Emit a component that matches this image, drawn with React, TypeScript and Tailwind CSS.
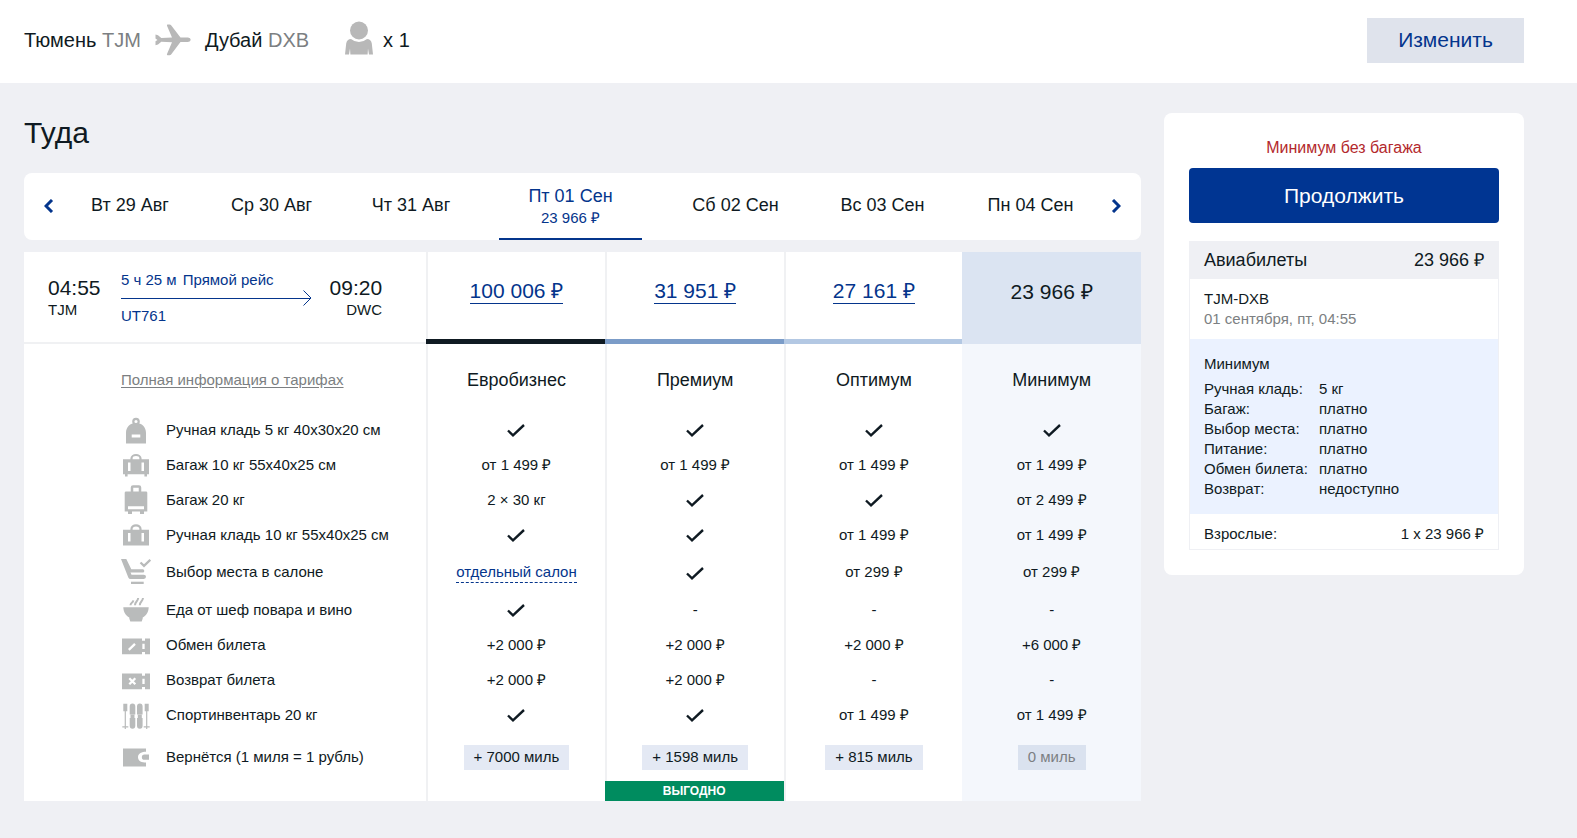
import { useState, type ReactNode } from 'react'
import clsx from 'clsx'

type IconName =
  | 'backpack' | 'case' | 'luggage' | 'handbag' | 'seat' | 'meal' | 'exchange' | 'refund' | 'sport' | 'wallet'

const ICONS: Record<IconName, ReactNode> = {
  backpack: (
    <>
      <circle cx="15" cy="6.5" r="2.7" fill="none" stroke="currentColor" strokeWidth="2.2" />
      <path fillRule="evenodd" d="M5 28.5V18C5 12 9 8 15 8s10 4 10 10v10.500zM10.700 19.500v3h8.600v-3z" />
    </>
  ),
  case: (
    <>
      <path d="M10.500 10V8.500a4.500 3.500 0 0 1 9 0V10" fill="none" stroke="currentColor" strokeWidth="2.200" />
      <path fillRule="evenodd" d="M2 9.200h26v15h-2v2.300h-2.600v-2.300H6.600v2.300H4v-2.300H2zM7 12.500v8.500h2.500v-8.500zM20.500 12.500v8.500H23v-8.500z" />
    </>
  ),
  luggage: (
    <>
      <path d="M11 7V2.500q0-1 1-1h6q1 0 1 1V7" fill="none" stroke="currentColor" strokeWidth="2.500" />
      <path fillRule="evenodd" d="M5 6.500h20q1.300 0 1.300 1.300v18.700H23v2.500h-4v-2.500h-8V29H7v-2.500H3.700V7.800Q3.700 6.500 5 6.500zM7 21.300v2.900h16v-2.900z" />
    </>
  ),
  handbag: (
    <>
      <path d="M10.500 10.500V9a4.500 3.700 0 0 1 9 0v1.500" fill="none" stroke="currentColor" strokeWidth="2.200" />
      <path fillRule="evenodd" d="M2 9.800h26v15.700H2zM7 13v8.500h2.500V13zM20.500 13v8.500H23V13z" />
    </>
  ),
  seat: (
    <>
      <path d="M0 2h5.300l5 10.200h11.500q1.500 0 1.500 1.700t-1.500 1.700H9.500l1 2.100h12.300q2.200 0 2.200 2.100T22.800 22H9.500q-1.500 0-2.200-1.500z" />
      <path d="M10 24.700h12.700V27H10z" />
      <path d="M19.500 5.500l3.500 3.300 6.300-6" fill="none" stroke="currentColor" strokeWidth="2.300" />
    </>
  ),
  meal: (
    <>
      <path d="M2.300 12.200h25.400c-.2 5-2.500 8.300-6 10.300v1l-1 3H9.300l-1-3v-1c-3.500-2-5.800-5.300-6-10.300z" />
      <path d="M9.500 10.300c0-3 2.500-2 2.800-5M14 10.300c0-4 2.800-3.500 3.200-7.300M18.800 10.300c0-4 2.800-3.500 3.200-7.300" fill="none" stroke="currentColor" strokeWidth="2" />
    </>
  ),
  exchange: (
    <>
      <path d="M1 8.500h20v2.200h3V8.500h5v15.700h-5V22h-3v2.200H1z" />
      <path d="M7.800 19.800l6.200-6M22.500 13.800v5.200" fill="none" stroke="#fff" strokeWidth="2.300" />
    </>
  ),
  refund: (
    <>
      <path d="M1 8.500h20v2.200h3V8.500h5v15.700h-5V22h-3v2.200H1z" />
      <path d="M8.300 13.300l6 6M14.300 13.300l-6 6M22.500 13.800v5.200" fill="none" stroke="#fff" strokeWidth="2.300" />
    </>
  ),
  sport: (
    <>
      <path d="M2.300 3.800h4v7.500h-4zM23.700 3.800h4v7.500h-4z" />
      <path d="M4.300 11v18M25.700 11v18M1.300 26.800h6M22.700 26.800h6" fill="none" stroke="currentColor" strokeWidth="1.200" />
      <path d="M8.700 14.500v-8q0-3 2.800-3t2.800 3v8zM8.700 18h5.600v7.500q0 3.300-2.800 3.300t-2.800-3.300zM16 14.500v-8q0-3 2.800-3t2.800 3v8zM16 18h5.600v7.500q0 3.300-2.800 3.300T16 25.500z" />
      <path d="M9.500 14.500h4v4h-4zM16.800 14.500h4v4h-4z" />
    </>
  ),
  wallet: (
    <path d="M2 6.500h23v3.300c-4 0-8 1.500-8 5.400s4 5.400 8 5.400v3.900H2zM28 12.500v5.300h-4.500a2.650 2.650 0 0 1 0-5.300z" />
  ),
}

type Tone = 'business' | 'premium' | 'optimum' | 'minimum'

const FARES: { id: Tone; name: string; price: string; miles: string }[] = [
  { id: 'business', name: 'Евробизнес', price: '100 006 ₽', miles: '+ 7000 миль' },
  { id: 'premium', name: 'Премиум', price: '31 951 ₽', miles: '+ 1598 миль' },
  { id: 'optimum', name: 'Оптимум', price: '27 161 ₽', miles: '+ 815 миль' },
  { id: 'minimum', name: 'Минимум', price: '23 966 ₽', miles: '0 миль' },
]

const BAR: Record<Tone, string> = {
  business: 'bg-[#0f1a22]',
  premium: 'bg-[#7b9cc8]',
  optimum: 'bg-[#b3c8e3]',
  minimum: 'bg-[#dbe4f2]',
}

// 'yes' is drawn as a tick
const SERVICES: { icon: IconName; label: string; values: string[]; tall?: boolean }[] = [
  { icon: 'backpack', label: 'Ручная кладь 5 кг 40x30x20 см', values: ['yes', 'yes', 'yes', 'yes'] },
  { icon: 'case', label: 'Багаж 10 кг 55x40x25 см', values: ['от 1 499 ₽', 'от 1 499 ₽', 'от 1 499 ₽', 'от 1 499 ₽'] },
  { icon: 'luggage', label: 'Багаж 20 кг', values: ['2 × 30 кг', 'yes', 'yes', 'от 2 499 ₽'] },
  { icon: 'handbag', label: 'Ручная кладь 10 кг 55x40x25 см', values: ['yes', 'yes', 'от 1 499 ₽', 'от 1 499 ₽'] },
  { icon: 'seat', label: 'Выбор места в салоне', values: ['cabin', 'yes', 'от 299 ₽', 'от 299 ₽'], tall: true },
  { icon: 'meal', label: 'Еда от шеф повара и вино', values: ['yes', '-', '-', '-'] },
  { icon: 'exchange', label: 'Обмен билета', values: ['+2 000 ₽', '+2 000 ₽', '+2 000 ₽', '+6 000 ₽'] },
  { icon: 'refund', label: 'Возврат билета', values: ['+2 000 ₽', '+2 000 ₽', '-', '-'] },
  { icon: 'sport', label: 'Спортинвентарь 20 кг', values: ['yes', 'yes', 'от 1 499 ₽', 'от 1 499 ₽'] },
]

const DATES = [
  { label: 'Вт 29 Авг' },
  { label: 'Ср 30 Авг' },
  { label: 'Чт 31 Авг' },
  { label: 'Пт 01 Сен', price: '23 966 ₽' },
  { label: 'Сб 02 Сен' },
  { label: 'Вс 03 Сен' },
  { label: 'Пн 04 Сен' },
]

const SUMMARY = [
  ['Ручная кладь:', '5 кг'],
  ['Багаж:', 'платно'],
  ['Выбор места:', 'платно'],
  ['Питание:', 'платно'],
  ['Обмен билета:', 'платно'],
  ['Возврат:', 'недоступно'],
]

export default function App() {
  return (
    <div className="min-h-screen bg-[#eff0f4] font-['Liberation_Sans',Arial,sans-serif] text-[15px] leading-5 text-[#0f1a22]">
      <Header />
      <main className="flex items-start gap-[23px] pt-[30px] pr-[53px] pb-9 pl-6">
        <section className="min-w-0 flex-1">
          <h1 className="mb-5 text-3xl leading-10">Туда</h1>
          <DateStrip />
          <FareTable />
        </section>
        <Summary />
      </main>
    </div>
  )
}

function Header() {
  return (
    <header className="flex h-[83px] items-center bg-white pr-[53px] pb-[3px] pl-6 text-xl">
      <span>
        Тюмень <span className="text-[#7c7f82]">TJM</span>
      </span>
      <svg viewBox="0 0 36 32" className="mx-[14px] h-8 w-9 fill-[#b8b8b8]" aria-hidden="true">
        <path d="M.5 10.500l2.500.8 3.300 2.700 10.700-.5L12 1.800Q11.500.5 12.800.5h1.800q.9 0 1.500.8L25.500 13.500H33q2.700.2 2.700 2.300T33 18h-7.500l-9.400 12.500q-.6.800-1.500.8h-1.800q-1.300 0-.8-1.300L17 18.300l-10.700-.5L3 20.500l-2.500.8v-4l2-1.400-2-1.400z" />
      </svg>
      <span>
        Дубай <span className="text-[#7c7f82]">DXB</span>
      </span>
      <svg viewBox="0 0 28 34" className="mr-2.5 mb-1 ml-9 h-[34px] w-7 fill-[#b8b8b8]" aria-hidden="true">
        <circle cx="14" cy="9.500" r="9" />
        <path d="M6 18q3.500 3 8 3t8-3q4 .200 4.800 4.500L28 33.500h-4l-1-6-.4 6H5.400l-.4-6-1 6H0l1.200-11Q2 18.200 6 18z" />
      </svg>
      <span>x 1</span>
      <button type="button" className="ml-auto h-[45px] w-[157px] bg-[#dfe3ec] text-[21px] text-[#04358c]">
        Изменить
      </button>
    </header>
  )
}

function DateStrip() {
  const [active, setActive] = useState(3)
  return (
    <nav className="mb-3 flex h-[67px] rounded-lg bg-white text-lg leading-6">
      <ArrowButton label="Предыдущие даты" d="M8 1L2 7l6 6" className="pl-3.5" />
      <div className="grid flex-1 grid-cols-[140fr_143fr_136fr_183fr_147fr_147fr_149fr]">
        {DATES.map((date, i) => (
          <button
            key={date.label}
            type="button"
            onClick={() => setActive(i)}
            className={clsx(
              'flex flex-col items-center justify-center whitespace-nowrap',
              i === active ? 'mx-5 border-b-2 border-[#04358c] text-[#04358c]' : 'pb-1',
            )}
          >
            {date.label}
            {date.price && <span className="text-[15px] leading-5">{date.price}</span>}
          </button>
        ))}
      </div>
      <ArrowButton label="Следующие даты" d="M2 1l6 6-6 6" className="pr-3.5" />
    </nav>
  )
}

function ArrowButton({ label, d, className }: { label: string; d: string; className: string }) {
  return (
    <button type="button" aria-label={label} className={clsx('flex w-9 items-center justify-center pb-0.5', className)}>
      <svg viewBox="0 0 10 14" className="h-3.5 w-2.5" fill="none" stroke="#04358c" strokeWidth="3">
        <path d={d} />
      </svg>
    </button>
  )
}

function FareTable() {
  return (
    <table className="w-full table-fixed border-separate border-spacing-0 bg-white">
      <colgroup>
        <col className="w-[36%]" />
        <col span={4} className="w-[16%]" />
      </colgroup>
      <thead>
        <tr>
          <td className="border-b-2 border-[#f0f1f3] p-0 pr-11 pl-6 align-top">
            <Flight />
          </td>
          {FARES.map((fare) => (
            <td key={fare.id} className={clsx('p-0', fare.id === 'minimum' && 'bg-[#dbe4f2]')}>
              <div className="flex h-[92px] flex-col text-[21px] leading-6">
                <div
                  className={clsx(
                    'flex flex-1 items-center justify-center pb-2',
                    fare.id !== 'minimum' && 'border-l-2 border-[#f0f1f3]',
                  )}
                >
                  {fare.id === 'minimum' ? (
                    <span>{fare.price}</span>
                  ) : (
                    <a href="#" className="border-b border-[#04358c] text-[#04358c]">{fare.price}</a>
                  )}
                </div>
                <div className={clsx('h-[5px]', BAR[fare.id])} />
              </div>
            </td>
          ))}
        </tr>
        <tr className="h-[68px]">
          <td className="p-0 pt-1 pl-[97px]">
            <a href="#" className="text-[#7c7f82] underline underline-offset-2">Полная информация о тарифах</a>
          </td>
          {FARES.map((fare) => (
            <th key={fare.id} scope="col" className={clsx('p-0 pt-1 text-lg font-normal', cellClass(fare.id))}>
              {fare.name}
            </th>
          ))}
        </tr>
      </thead>
      <tbody>
        {SERVICES.map((row) => (
          <tr key={row.label} className={row.tall ? 'h-10' : 'h-[35px]'}>
            <ServiceLabel icon={row.icon}>{row.label}</ServiceLabel>
            {row.values.map((value, i) => (
              <td key={FARES[i].id} className={clsx('p-0 text-center', cellClass(FARES[i].id))}>
                <Value value={value} />
              </td>
            ))}
          </tr>
        ))}
        <tr className="h-[49px]">
          <ServiceLabel icon="wallet">Вернётся (1 миля = 1 рубль)</ServiceLabel>
          {FARES.map((fare) => (
            <td key={fare.id} className={clsx('p-0 pt-0.5 text-center', cellClass(fare.id))}>
              <span
                className={clsx(
                  'inline-block px-2.5 pt-0.5 pb-[3px] align-middle',
                  fare.id === 'minimum' ? 'bg-[#dae2ef] text-[#7c7f82]' : 'bg-[#e4e9f4]',
                )}
              >
                {fare.miles}
              </span>
            </td>
          ))}
        </tr>
        <tr className="h-5">
          <td />
          {FARES.map((fare) =>
            fare.id === 'premium' ? (
              <td key={fare.id} className="bg-[#008c5f] p-0 text-center text-xs leading-5 font-bold text-white">
                ВЫГОДНО
              </td>
            ) : (
              <td key={fare.id} className={clsx('p-0', cellClass(fare.id))} />
            ),
          )}
        </tr>
      </tbody>
    </table>
  )
}

function cellClass(id: Tone) {
  return id === 'minimum' ? 'bg-[#f4f7fc]' : 'border-l-2 border-[#f0f1f3]'
}

function ServiceLabel({ icon, children }: { icon: IconName; children: ReactNode }) {
  return (
    <th scope="row" className="p-0 pl-[97px] text-left font-normal whitespace-nowrap">
      <div className="flex items-center gap-[15px]">
        <svg viewBox="0 0 30 30" className="size-[30px] shrink-0 fill-current text-[#b9bbbb]" aria-hidden="true">
          {ICONS[icon]}
        </svg>
        {children}
      </div>
    </th>
  )
}

function Value({ value }: { value: string }) {
  if (value === 'yes') {
    return (
      <svg viewBox="0 0 18 13" className="mx-auto mt-0.5 h-[13px] w-[18px]" fill="none" stroke="#0f1a22" strokeWidth="2.400" role="img" aria-label="Включено">
        <path d="M1 6.500l5 4.800L17 1" />
      </svg>
    )
  }
  if (value === 'cabin') {
    return <a href="#" className="border-b border-dashed border-[#04358c] pb-0.5 text-[#04358c]">отдельный салон</a>
  }
  return <>{value}</>
}

function Flight() {
  return (
    <div className="flex items-start justify-between pt-6">
      <div className="w-[73px]">
        <div className="text-[21px] leading-6">04:55</div>
        <div>TJM</div>
      </div>
      <div className="-mt-1.5 flex-1 text-[#04358c]">
        <div className="flex gap-1.5 whitespace-nowrap">
          <span>5 ч 25 м</span>
          <span>Прямой рейс</span>
        </div>
        <div className="flex h-4 items-center">
          <div className="h-px flex-1 bg-[#04358c]" />
          <svg viewBox="0 0 9 16" className="-ml-2 h-4 w-[9px]" fill="none" stroke="currentColor" aria-hidden="true">
            <path d="M.5 .500L8 8 .5 15.500" />
          </svg>
        </div>
        <div>UT761</div>
      </div>
      <div className="w-[70px] text-right">
        <div className="text-[21px] leading-6">09:20</div>
        <div>DWC</div>
      </div>
    </div>
  )
}

function Summary() {
  return (
    <aside className="w-[360px] shrink-0 rounded-lg bg-white p-[25px]">
      <p className="mb-2.5 text-center text-base leading-5 text-[#b3292c]">Минимум без багажа</p>
      <button type="button" className="mb-[18px] h-[55px] w-full rounded bg-[#003592] text-[21px] text-white">
        Продолжить
      </button>
      <div className="border border-[#eff0f4]">
        <div className="flex items-center justify-between bg-[#eff0f4] px-3.5 pt-1.5 pb-[7px] text-lg leading-6">
          <span>Авиабилеты</span>
          <span>23 966 ₽</span>
        </div>
        <div className="px-3.5 py-2.5">
          <div>TJM-DXB</div>
          <div className="text-[#7c7f82]">01 сентября, пт, 04:55</div>
        </div>
        <div className="bg-[#ebf2ff] px-3.5 py-[15px]">
          <div className="mb-[5px]">Минимум</div>
          <dl className="grid grid-cols-[115px_1fr]">
            {SUMMARY.map(([term, value]) => (
              <div key={term} className="contents">
                <dt className="whitespace-nowrap">{term}</dt>
                <dd>{value}</dd>
              </div>
            ))}
          </dl>
        </div>
        <div className="flex justify-between px-3.5 pt-2.5 pb-[5px]">
          <span>Взрослые:</span>
          <span>1 x 23 966 ₽</span>
        </div>
      </div>
    </aside>
  )
}
